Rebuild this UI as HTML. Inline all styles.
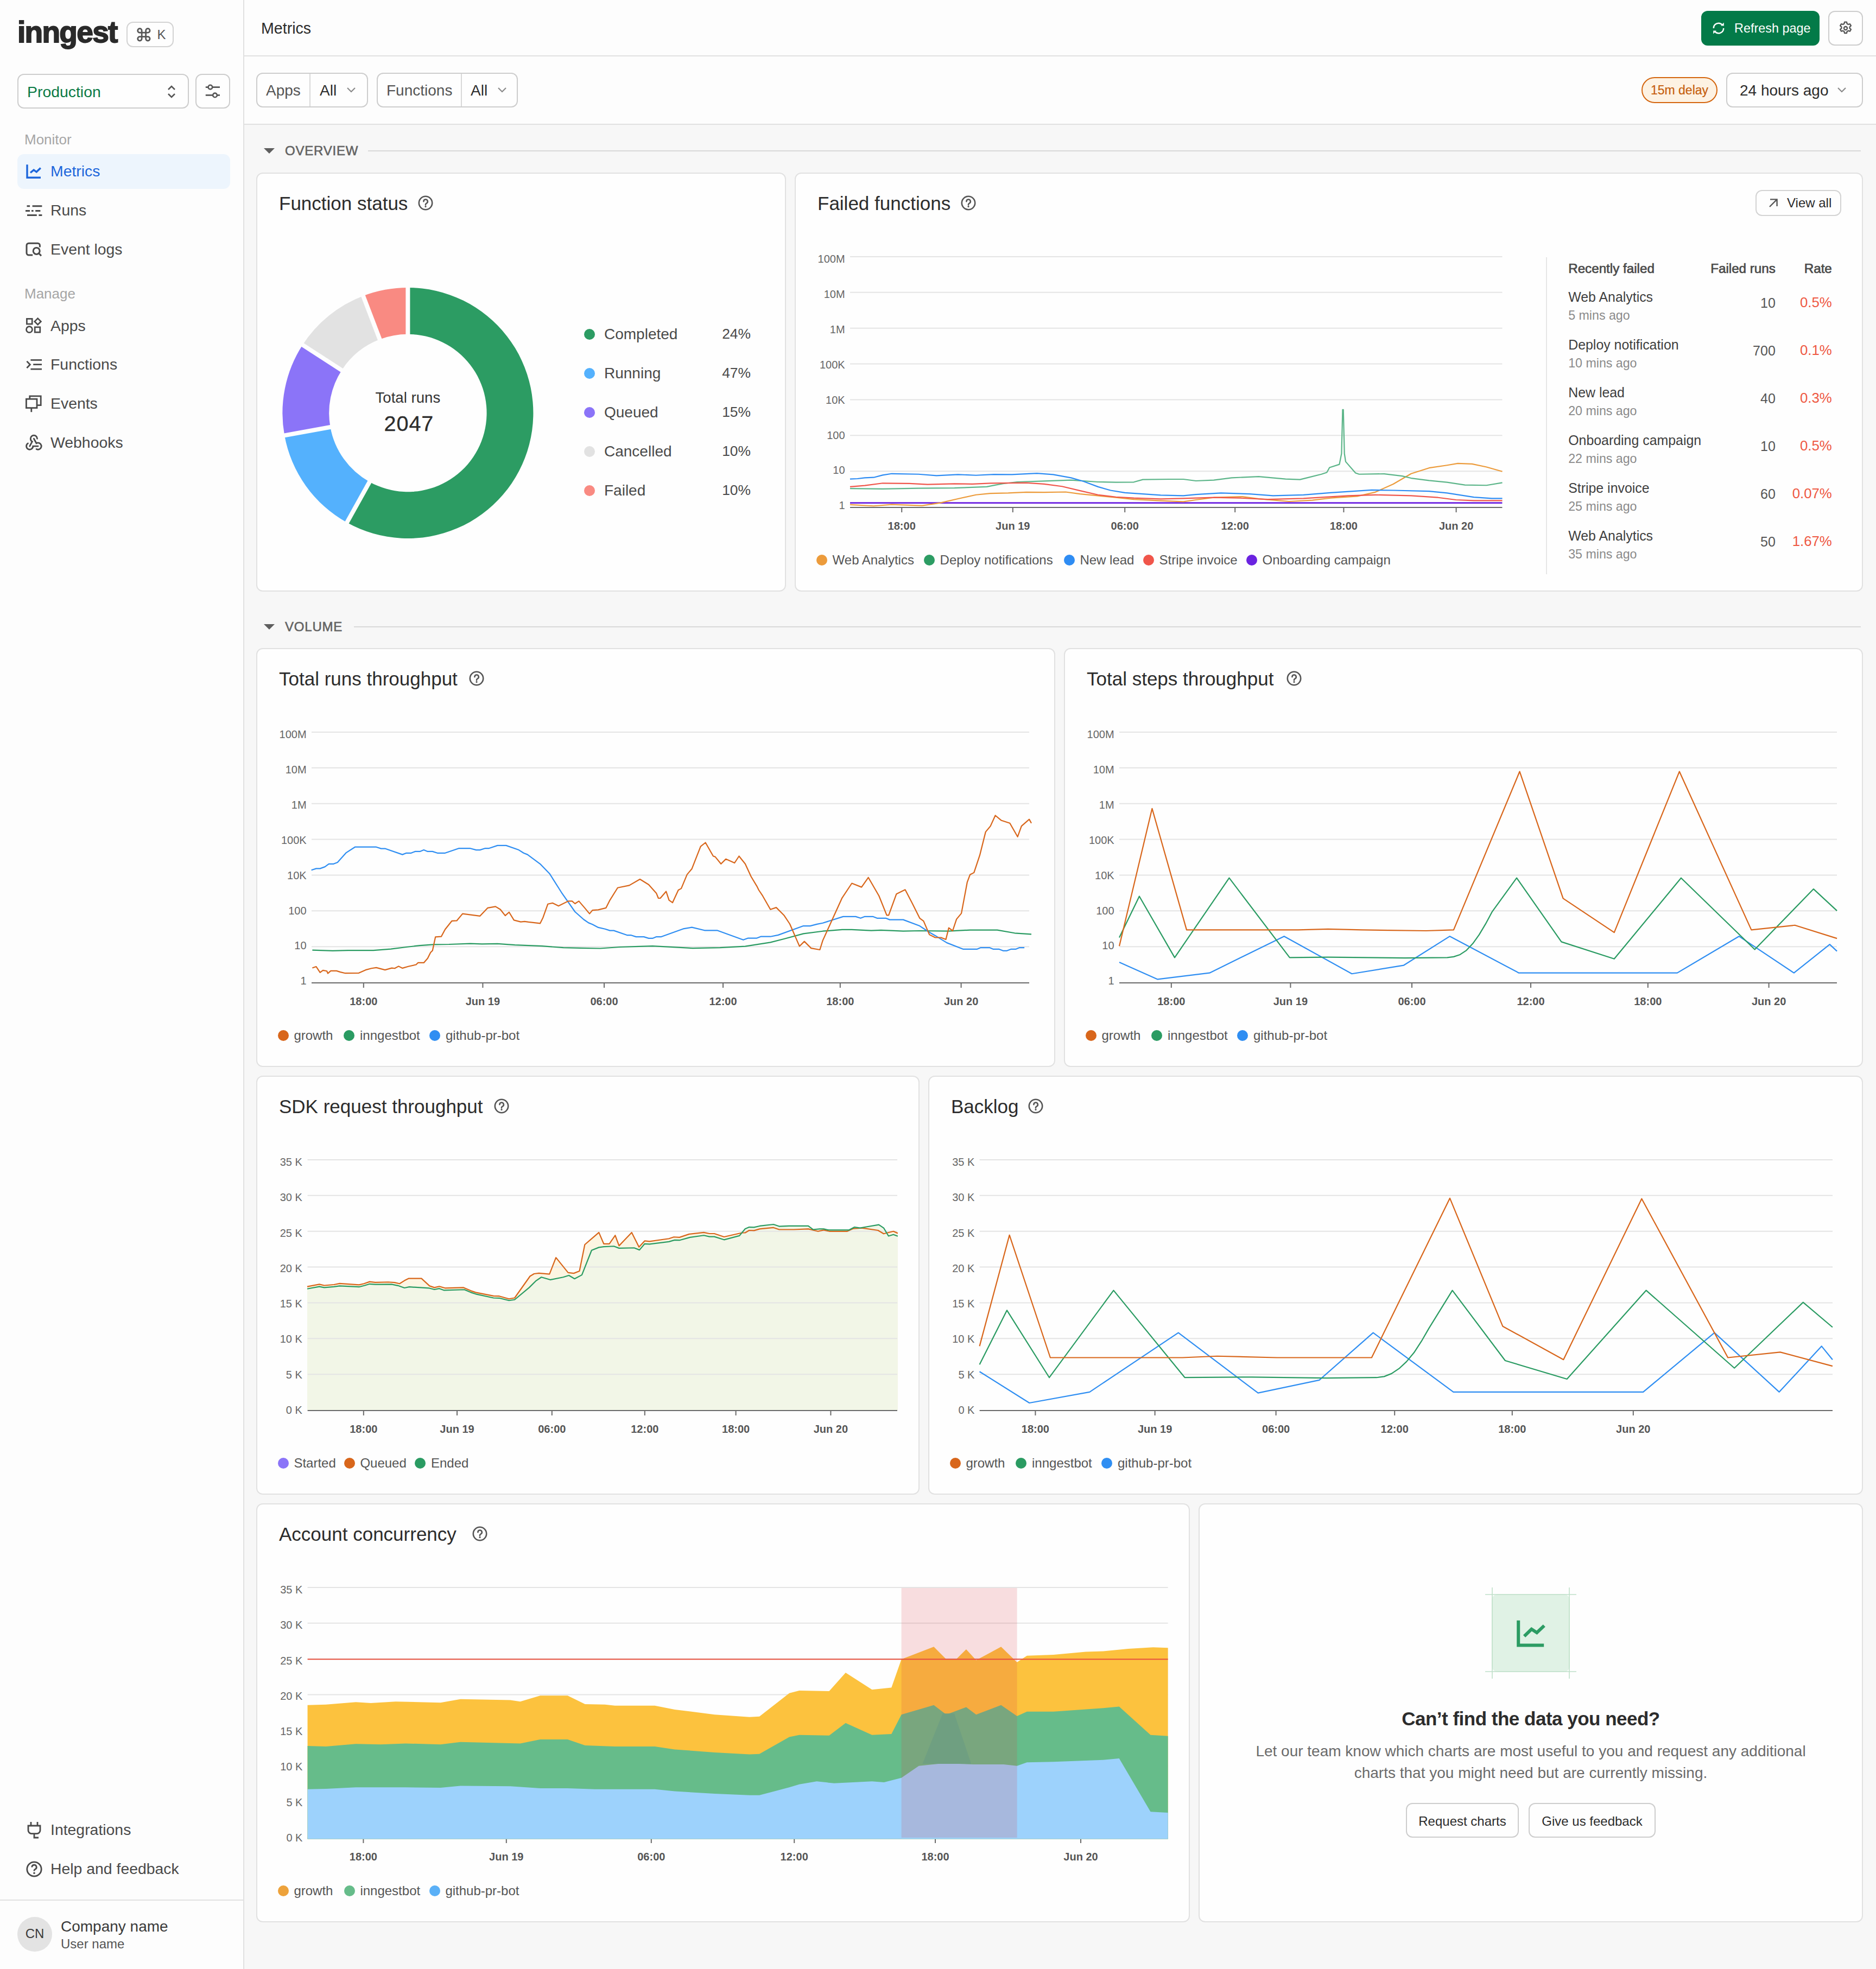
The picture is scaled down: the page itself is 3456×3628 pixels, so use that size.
<!DOCTYPE html>
<html><head><meta charset="utf-8"><title>Metrics</title><style>
html,body{margin:0;padding:0;}
body{width:3456px;height:3628px;overflow:hidden;background:#f7f7f7;}
#root{zoom:2;width:1728px;height:1814px;position:relative;overflow:hidden;font-family:"Liberation Sans",sans-serif;color:#2c2c2c;background:#f7f7f7;}
@media (max-width:2600px){body{width:1728px;height:1814px;}#root{zoom:1;}}
.abs{position:absolute;}
.t{position:absolute;white-space:nowrap;line-height:1;}
#side{position:absolute;left:0;top:0;width:224px;height:1814px;background:#fdfdfd;border-right:1px solid #e1e1e1;}
#hdr{position:absolute;left:225px;top:0;width:1503px;height:51px;background:#fdfdfd;border-bottom:1px solid #e1e1e1;}
#fbar{position:absolute;left:225px;top:52px;width:1503px;height:62px;background:#fdfdfd;border-bottom:1px solid #e1e1e1;}
.card{position:absolute;background:#fefefe;border:1px solid #e1e1e1;border-radius:6px;box-sizing:border-box;}
.nav{position:absolute;left:16px;width:196px;height:32px;border-radius:6px;}
.nav .lbl{position:absolute;left:30.5px;top:8.6px;font-size:14.2px;line-height:1;color:#4a4a4a;white-space:nowrap;}
.nav svg{position:absolute;left:7.4px;top:8px;overflow:visible;}
.btn{position:absolute;box-sizing:border-box;border:1px solid #cdcdcd;border-radius:6px;background:#fefefe;}
.ttl{position:absolute;left:21px;top:19.3px;font-size:17.5px;line-height:17.5px;color:#2c2c2c;white-space:nowrap;}
.q{position:absolute;}
.sech{position:absolute;left:243px;}
</style></head>
<body><div id="root">
<div id="side">
  <div class="t" style="left:16px;top:12.7px;font-size:27.5px;font-weight:bold;letter-spacing:-0.85px;color:#2a2a2a;line-height:34px;-webkit-text-stroke:0.9px #2a2a2a;">inngest</div>
  <div class="btn" style="left:116.6px;top:20.1px;width:43.6px;height:23.5px;border-color:#d3d3d3;">
    <svg class="abs" style="left:7.3px;top:3.5px" width="14.9" height="14.9" viewBox="0 0 24 24"><path d="M9 6v12M15 6v12M6 9h12M6 15h12M9 6a3 3 0 1 0-3 3M15 6a3 3 0 1 1 3 3M9 18a3 3 0 1 1-3-3M15 18a3 3 0 1 0 3-3" fill="none" stroke="#555" stroke-width="2.2"/></svg>
    <div class="t" style="left:27.1px;top:5.1px;font-size:12px;color:#555;">K</div>
  </div>
  <div class="btn" style="left:16px;top:68px;width:158px;height:32px;">
    <div class="t" style="left:8px;top:8.5px;font-size:14.2px;color:#0b7a45;">Production</div>
    <svg class="abs" style="left:136px;top:9px" width="10" height="13" viewBox="0 0 10 13"><path d="M2 4.5L5 1.5L8 4.5M2 8.5L5 11.5L8 8.5" fill="none" stroke="#555" stroke-width="1.3"/></svg>
  </div>
  <div class="btn" style="left:180px;top:68px;width:32px;height:32px;">
    <svg class="abs" style="left:7px;top:7px" width="16" height="16" viewBox="0 0 16 16"><path d="M1.4 4.3h2.3M7.7 4.3h6.8M1.4 11.7h6.6M12 11.7h2.5" fill="none" stroke="#555" stroke-width="1.4"/><circle cx="5.7" cy="4.3" r="1.9" fill="none" stroke="#555" stroke-width="1.3"/><circle cx="10" cy="11.7" r="1.9" fill="none" stroke="#555" stroke-width="1.3"/></svg>
  </div>
  <div class="t" style="left:22.5px;top:122.2px;font-size:13px;color:#a6a6a6;">Monitor</div>
  <div class="nav" style="top:142px;background:#edf5fd;">
    <svg width="16" height="16" viewBox="0 0 16 16"><path d="M1.5 1.6V13.6H14" fill="none" stroke="#1d66db" stroke-width="1.7"/><path d="M4.5 9.1L7.6 6.6L10.1 8.4L13.9 4.8" fill="none" stroke="#1d66db" stroke-width="1.7"/></svg>
    <div class="lbl" style="color:#1d66db;">Metrics</div>
  </div>
  <div class="nav" style="top:178px;">
    <svg width="16" height="16" viewBox="0 0 16 16"><path d="M1.25 3.85h2.8M6.3 3.85h8.9M0 8.2h4.05M5.5 8.2h1.8M9.1 8.2h4.6M1.5 12.2h8.9M12.2 12.2h3" fill="none" stroke="#4a4a4a" stroke-width="1.5"/></svg>
    <div class="lbl">Runs</div>
  </div>
  <div class="nav" style="top:214px;">
    <svg width="16" height="16" viewBox="0 0 16 16"><path d="M6.6 13H3a2 2 0 0 1-2-2V4.1a2 2 0 0 1 2-2h8.2a2 2 0 0 1 2 2V5.7" fill="none" stroke="#4a4a4a" stroke-width="1.5"/><circle cx="10.1" cy="9.2" r="3" fill="none" stroke="#4a4a4a" stroke-width="1.5"/><path d="M12.3 11.4l2.2 2.3" stroke="#4a4a4a" stroke-width="1.5"/></svg>
    <div class="lbl">Event logs</div>
  </div>
  <div class="t" style="left:22.5px;top:264.2px;font-size:13px;color:#a6a6a6;">Manage</div>
  <div class="nav" style="top:284.2px;">
    <svg width="16" height="16" viewBox="0 0 16 16"><rect x="1.2" y="1.7" width="4.9" height="4.8" fill="none" stroke="#4a4a4a" stroke-width="1.35"/><path d="M11.3 1.3L14.2 4.2L11.3 7.1L8.4 4.2Z" fill="none" stroke="#4a4a4a" stroke-width="1.35"/><circle cx="3.5" cy="11.6" r="2.75" fill="none" stroke="#4a4a4a" stroke-width="1.35"/><rect x="8.6" y="9.4" width="4.8" height="4.7" fill="none" stroke="#4a4a4a" stroke-width="1.35"/></svg>
    <div class="lbl">Apps</div>
  </div>
  <div class="nav" style="top:320px;">
    <svg width="16" height="16" viewBox="0 0 16 16"><path d="M1.2 4.8L4.2 7.9L1.2 11M4.7 3.7H15M7.1 7.8H15M4.7 12.1H15" fill="none" stroke="#4a4a4a" stroke-width="1.4"/></svg>
    <div class="lbl">Functions</div>
  </div>
  <div class="nav" style="top:356px;">
    <svg width="16" height="16" viewBox="0 0 16 16"><path d="M3.9 3.6V0.9H14.1V9.3H10.7" fill="none" stroke="#4a4a4a" stroke-width="1.4"/><rect x="0.7" y="3.6" width="9.8" height="8.2" fill="none" stroke="#4a4a4a" stroke-width="1.4"/><path d="M5.4 11.8V15.6" stroke="#4a4a4a" stroke-width="1.4"/></svg>
    <div class="lbl">Events</div>
  </div>
  <div class="nav" style="top:392px;">
    <svg width="18.4" height="18.4" viewBox="0 0 24 24" style="left:5.8px;top:6px;"><path d="M4.876 13.61a4 4 0 1 0 6.124 3.39h6" fill="none" stroke="#4a4a4a" stroke-width="1.85" stroke-linecap="round"/><path d="M15.066 20.502a4 4 0 1 0 1.934-7.502c-.706 0-1.424.179-2 .5l-3-5.5" fill="none" stroke="#4a4a4a" stroke-width="1.85" stroke-linecap="round"/><path d="M16 8a4 4 0 1 0-8 0c0 1.506.77 2.818 2 3.5l-3 5.5" fill="none" stroke="#4a4a4a" stroke-width="1.85" stroke-linecap="round"/></svg>
    <div class="lbl">Webhooks</div>
  </div>
  <div class="nav" style="top:1670px;">
    <svg width="16" height="16" viewBox="0 0 16 16"><path d="M5 .5v3.5M11 .5v3.5M2.5 4h11v4.3a3 3 0 0 1-3 3h-5a3 3 0 0 1-3-3z" fill="none" stroke="#4a4a4a" stroke-width="1.4"/><path d="M8 11.3v3.7h4" fill="none" stroke="#4a4a4a" stroke-width="1.4"/></svg>
    <div class="lbl">Integrations</div>
  </div>
  <div class="nav" style="top:1706px;">
    <svg width="16" height="16" viewBox="0 0 16 16"><circle cx="8" cy="8" r="6.6" fill="none" stroke="#4a4a4a" stroke-width="1.4"/><path d="M5.9 6.2a2.1 2.1 0 1 1 3 1.9c-.6.3-.9.6-.9 1.2v.4" fill="none" stroke="#4a4a4a" stroke-width="1.4"/><circle cx="8" cy="11.6" r=".9" fill="#4a4a4a"/></svg>
    <div class="lbl">Help and feedback</div>
  </div>
  <div class="abs" style="left:0;top:1750px;width:224px;height:1px;background:#e1e1e1;"></div>
  <div class="abs" style="left:16px;top:1766px;width:32px;height:32px;border-radius:16px;background:#e3e3e3;"></div>
  <div class="t" style="left:16px;top:1775.7px;width:32px;text-align:center;font-size:12px;color:#3a3a3a;">CN</div>
  <div class="t" style="left:56px;top:1768px;font-size:14px;color:#3a3a3a;">Company name</div>
  <div class="t" style="left:56px;top:1785px;font-size:12px;color:#555;">User name</div>
</div>

<div id="hdr">
  <div class="t" style="left:15.5px;top:19.1px;font-size:14.3px;color:#2c2c2c;">Metrics</div>
  <div class="abs" style="left:1342px;top:10px;width:109px;height:32px;border-radius:6px;background:#037a48;">
    <svg class="abs" style="left:9.9px;top:10.1px" width="12" height="12" viewBox="0 0 12 12"><path d="M1.4 6A4.6 4.6 0 0 1 9.4 2.9" fill="none" stroke="#fff" stroke-width="1.25"/><path d="M8 3.7H10.9V0.8Z" fill="#fff"/><path d="M10.6 6A4.6 4.6 0 0 1 2.6 9.1" fill="none" stroke="#fff" stroke-width="1.25"/><path d="M4 8.3H1.1V11.2Z" fill="#fff"/></svg>
    <div class="t" style="left:30.5px;top:10.5px;font-size:11.7px;color:#fff;">Refresh page</div>
  </div>
  <div class="btn" style="left:1459px;top:10px;width:32px;height:32px;">
    <svg class="abs" style="left:8px;top:8px" width="14" height="14" viewBox="0 0 24 24"><path d="M10.3 2.3h3.4l.6 2.6 1.9 1.1 2.6-.8 1.7 2.9-2 1.8v2.2l2 1.8-1.7 2.9-2.6-.8-1.9 1.1-.6 2.6h-3.4l-.6-2.6-1.9-1.1-2.6.8-1.7-2.9 2-1.8v-2.2l-2-1.8 1.7-2.9 2.6.8 1.9-1.1z" fill="none" stroke="#555" stroke-width="2" stroke-linejoin="round"/><circle cx="12" cy="12" r="2.6" fill="none" stroke="#555" stroke-width="2"/></svg>
  </div>
</div>

<div id="fbar">
  <div class="btn" style="left:11px;top:15px;width:103px;height:32px;">
    <div class="abs" style="left:47.8px;top:0;width:1px;height:30px;background:#d9d9d9;"></div>
    <div class="t" style="left:8px;top:8.5px;font-size:14px;color:#555;">Apps</div>
    <div class="t" style="left:57.5px;top:8.5px;font-size:14px;color:#2c2c2c;">All</div>
    <svg class="abs" style="left:82px;top:12px" width="9" height="6" viewBox="0 0 9 6"><path d="M1 1l3.5 3.5L8 1" fill="none" stroke="#8a8a8a" stroke-width="1.1"/></svg>
  </div>
  <div class="btn" style="left:122px;top:15px;width:130px;height:32px;">
    <div class="abs" style="left:76.5px;top:0;width:1px;height:30px;background:#d9d9d9;"></div>
    <div class="t" style="left:8px;top:8.5px;font-size:14px;color:#555;">Functions</div>
    <div class="t" style="left:85.5px;top:8.5px;font-size:14px;color:#2c2c2c;">All</div>
    <svg class="abs" style="left:110px;top:12px" width="9" height="6" viewBox="0 0 9 6"><path d="M1 1l3.5 3.5L8 1" fill="none" stroke="#8a8a8a" stroke-width="1.1"/></svg>
  </div>
  <div class="abs" style="left:1287px;top:19px;width:70px;height:24px;box-sizing:border-box;border:1px solid #d4660f;border-radius:12px;background:#fdf2e3;">
    <div class="t" style="left:0;width:68px;text-align:center;top:5.6px;font-size:11.5px;color:#c65f0e;-webkit-text-stroke:0.12px #c65f0e;">15m delay</div>
  </div>
  <div class="btn" style="left:1365px;top:15px;width:126px;height:32px;">
    <div class="t" style="left:11.5px;top:8.3px;font-size:14px;color:#2c2c2c;">24 hours ago</div>
    <svg class="abs" style="left:101px;top:12px" width="9" height="6" viewBox="0 0 9 6"><path d="M1 1l3.5 3.5L8 1" fill="none" stroke="#8a8a8a" stroke-width="1.1"/></svg>
  </div>
</div>
<svg class="abs" style="left:243px;top:136.3px" width="10" height="5" viewBox="0 0 10 5"><path d="M0 0h10L5 5z" fill="#5e5e5e"/></svg>
<div class="t" style="left:262.5px;top:133.0px;font-size:12px;font-weight:normal;-webkit-text-stroke:0.3px #636363;letter-spacing:0.4px;color:#636363;">OVERVIEW</div>
<div class="abs" style="left:339px;top:138.5px;width:1375px;height:1px;background:#d9d9d9;"></div><svg class="abs" style="left:243px;top:574.8px" width="10" height="5" viewBox="0 0 10 5"><path d="M0 0h10L5 5z" fill="#5e5e5e"/></svg>
<div class="t" style="left:262.5px;top:571.5px;font-size:12px;font-weight:normal;-webkit-text-stroke:0.3px #636363;letter-spacing:0.4px;color:#636363;">VOLUME</div>
<div class="abs" style="left:326px;top:577px;width:1388px;height:1px;background:#d9d9d9;"></div><div class="card" style="left:236px;top:159px;width:488px;height:386px;"><div class="abs" style="left:-1px;top:-1px;width:488px;height:386px;"><div class="ttl">Function status</div><svg class="abs" style="left:149.0px;top:21.0px" width="14" height="14" viewBox="0 0 14 14"><circle cx="7" cy="7" r="6.1" fill="none" stroke="#555" stroke-width="1.3"/><path d="M5.2 5.6a1.85 1.85 0 1 1 2.6 1.7c-.5.25-.8.55-.8 1.05v.35" fill="none" stroke="#555" stroke-width="1.3" stroke-linecap="round"/><circle cx="7" cy="10.3" r=".8" fill="#555"/></svg><svg class="abs" style="left:0;top:0" width="488" height="386"><path d="M139.70 106.00A115.5 115.5 0 1 1 83.53 322.42L104.39 284.94A72.6 72.6 0 1 0 139.70 148.90Z" fill="#2c9c63"/><path d="M83.53 322.42A115.5 115.5 0 0 1 26.06 242.15L68.27 234.48A72.6 72.6 0 0 0 104.39 284.94Z" fill="#54b1fd"/><path d="M26.06 242.15A115.5 115.5 0 0 1 42.72 158.76L78.74 182.07A72.6 72.6 0 0 0 68.27 234.48Z" fill="#8b74f8"/><path d="M42.72 158.76A115.5 115.5 0 0 1 98.50 113.60L113.80 153.68A72.6 72.6 0 0 0 78.74 182.07Z" fill="#e2e2e2"/><path d="M98.50 113.60A115.5 115.5 0 0 1 139.70 106.00L139.70 148.90A72.6 72.6 0 0 0 113.80 153.68Z" fill="#f98a82"/><line x1="139.7" y1="221.5" x2="139.70" y2="103.00" stroke="#fefefe" stroke-width="4"/><line x1="139.7" y1="221.5" x2="82.07" y2="325.04" stroke="#fefefe" stroke-width="4"/><line x1="139.7" y1="221.5" x2="23.11" y2="242.69" stroke="#fefefe" stroke-width="4"/><line x1="139.7" y1="221.5" x2="40.21" y2="157.13" stroke="#fefefe" stroke-width="4"/><line x1="139.7" y1="221.5" x2="97.43" y2="110.80" stroke="#fefefe" stroke-width="4"/></svg><div class="t" style="left:89.7px;width:100px;text-align:center;top:200.7px;font-size:13.8px;color:#333;">Total runs</div><div class="t" style="left:90.5px;width:100px;text-align:center;top:221.5px;font-size:19.8px;letter-spacing:0.45px;text-indent:0.45px;color:#2c2c2c;-webkit-text-stroke:0.15px #2c2c2c;">2047</div><div class="abs" style="left:302px;top:144.0px;width:10px;height:10px;border-radius:5px;background:#2c9c63;"></div><div class="t" style="left:320.5px;top:142.1px;font-size:14px;color:#4a4a4a;">Completed</div><div class="t" style="right:32.5px;top:142.1px;font-size:13.2px;color:#4a4a4a;text-align:right;">24%</div><div class="abs" style="left:302px;top:180.0px;width:10px;height:10px;border-radius:5px;background:#54b1fd;"></div><div class="t" style="left:320.5px;top:178.0px;font-size:14px;color:#4a4a4a;">Running</div><div class="t" style="right:32.5px;top:178.0px;font-size:13.2px;color:#4a4a4a;text-align:right;">47%</div><div class="abs" style="left:302px;top:215.9px;width:10px;height:10px;border-radius:5px;background:#8b74f8;"></div><div class="t" style="left:320.5px;top:214.0px;font-size:14px;color:#4a4a4a;">Queued</div><div class="t" style="right:32.5px;top:214.0px;font-size:13.2px;color:#4a4a4a;text-align:right;">15%</div><div class="abs" style="left:302px;top:251.8px;width:10px;height:10px;border-radius:5px;background:#e2e2e2;"></div><div class="t" style="left:320.5px;top:249.9px;font-size:14px;color:#4a4a4a;">Cancelled</div><div class="t" style="right:32.5px;top:249.9px;font-size:13.2px;color:#4a4a4a;text-align:right;">10%</div><div class="abs" style="left:302px;top:287.8px;width:10px;height:10px;border-radius:5px;background:#f98a82;"></div><div class="t" style="left:320.5px;top:285.9px;font-size:14px;color:#4a4a4a;">Failed</div><div class="t" style="right:32.5px;top:285.9px;font-size:13.2px;color:#4a4a4a;text-align:right;">10%</div></div></div><div class="card" style="left:732px;top:159px;width:984px;height:386px;"><div class="abs" style="left:-1px;top:-1px;width:984px;height:386px;"><div class="ttl">Failed functions</div><svg class="abs" style="left:153.0px;top:21.0px" width="14" height="14" viewBox="0 0 14 14"><circle cx="7" cy="7" r="6.1" fill="none" stroke="#555" stroke-width="1.3"/><path d="M5.2 5.6a1.85 1.85 0 1 1 2.6 1.7c-.5.25-.8.55-.8 1.05v.35" fill="none" stroke="#555" stroke-width="1.3" stroke-linecap="round"/><circle cx="7" cy="10.3" r=".8" fill="#555"/></svg><svg class="abs" style="left:0;top:0" width="984" height="386"><line x1="51" y1="77.49" x2="651.7" y2="77.49" stroke="#e4e4e4" stroke-width="1"/><line x1="51" y1="110.42" x2="651.7" y2="110.42" stroke="#e4e4e4" stroke-width="1"/><line x1="51" y1="143.35" x2="651.7" y2="143.35" stroke="#e4e4e4" stroke-width="1"/><line x1="51" y1="176.28" x2="651.7" y2="176.28" stroke="#e4e4e4" stroke-width="1"/><line x1="51" y1="209.21" x2="651.7" y2="209.21" stroke="#e4e4e4" stroke-width="1"/><line x1="51" y1="242.14" x2="651.7" y2="242.14" stroke="#e4e4e4" stroke-width="1"/><line x1="51" y1="275.07" x2="651.7" y2="275.07" stroke="#e4e4e4" stroke-width="1"/><line x1="51" y1="308.5" x2="651.7" y2="308.5" stroke="#6a6a6a" stroke-width="1"/><line x1="98.6" y1="308.5" x2="98.6" y2="313" stroke="#6a6a6a" stroke-width="1"/><line x1="200.9" y1="308.5" x2="200.9" y2="313" stroke="#6a6a6a" stroke-width="1"/><line x1="304.1" y1="308.5" x2="304.1" y2="313" stroke="#6a6a6a" stroke-width="1"/><line x1="405.6" y1="308.5" x2="405.6" y2="313" stroke="#6a6a6a" stroke-width="1"/><line x1="505.7" y1="308.5" x2="505.7" y2="313" stroke="#6a6a6a" stroke-width="1"/><line x1="609.3" y1="308.5" x2="609.3" y2="313" stroke="#6a6a6a" stroke-width="1"/></svg><div class="t" style="right:937.7px;top:74.53px;font-size:10px;color:#666666;text-align:right;">100M</div><div class="t" style="right:937.7px;top:106.98px;font-size:10px;color:#666666;text-align:right;">10M</div><div class="t" style="right:937.7px;top:139.44px;font-size:10px;color:#666666;text-align:right;">1M</div><div class="t" style="right:937.7px;top:171.89px;font-size:10px;color:#666666;text-align:right;">100K</div><div class="t" style="right:937.7px;top:204.34px;font-size:10px;color:#666666;text-align:right;">10K</div><div class="t" style="right:937.7px;top:236.78px;font-size:10px;color:#666666;text-align:right;">100</div><div class="t" style="right:937.7px;top:269.24px;font-size:10px;color:#666666;text-align:right;">10</div><div class="t" style="right:937.7px;top:301.69px;font-size:10px;color:#666666;text-align:right;">1</div><div class="t" style="left:68.6px;width:60px;text-align:center;top:320.34px;font-size:10px;font-weight:bold;color:#555;">18:00</div><div class="t" style="left:170.9px;width:60px;text-align:center;top:320.34px;font-size:10px;font-weight:bold;color:#555;">Jun 19</div><div class="t" style="left:274.1px;width:60px;text-align:center;top:320.34px;font-size:10px;font-weight:bold;color:#555;">06:00</div><div class="t" style="left:375.6px;width:60px;text-align:center;top:320.34px;font-size:10px;font-weight:bold;color:#555;">12:00</div><div class="t" style="left:475.7px;width:60px;text-align:center;top:320.34px;font-size:10px;font-weight:bold;color:#555;">18:00</div><div class="t" style="left:579.3px;width:60px;text-align:center;top:320.34px;font-size:10px;font-weight:bold;color:#555;">Jun 20</div><svg class="abs" style="left:0;top:0" width="984" height="386"><polyline points="51,304.3 651.7,304.3" fill="none" stroke="#6a1fe0" stroke-width="1.3" stroke-linejoin="round" /><polyline points="50.97,305.97 72.79,307.13 89.31,305.81 117.4,306.8 133.93,304.32 150.45,300.52 166.98,296.89 180.2,295.56 196.72,295.23 213.25,294.41 229.77,294.57 249.6,294.24 262.82,296.06 279.34,297.71 295.87,299.36 312.39,301.02 337.18,302.34 358,303.16 369.52,301.51 386.05,299.36 412.49,298.54 427.36,300.52 455.45,303 476.93,301.84 493.46,299.86 518.25,298.21 534.77,294.41 551.29,286.97 567.82,277.39 584.34,272.1 600.87,269.62 610.78,267.97 624,268.46 637.22,271.27 651.76,275.4" fill="none" stroke="#ec9b3b" stroke-width="1.1" stroke-linejoin="round" /><polyline points="50.97,291.1 81.05,291.43 114.1,290.77 147.15,290.61 176.89,289.45 185.15,287.8 191.76,286.64 204.98,284.99 229.77,284.16 254.56,283.33 279.34,284.99 295.87,285.32 312.39,285.15 320.66,282.84 345.44,282.51 358,282.51 369.52,284 386.05,283.33 402.57,281.19 427.36,280.03 452.15,282.34 465.37,282.84 471.98,281.19 485.2,277.88 490.15,276.23 492.63,271.77 501.72,268.79 503.7,258.88 504.7,218.39 505.36,218.39 506.35,258.88 507.5,266.31 516.59,276.73 519.9,277.88 543.03,277.55 559.56,279.53 567.82,281.52 584.34,283.67 600.87,285.32 617.39,287.8 637.22,288.13 651.76,285.65" fill="none" stroke="#5cb589" stroke-width="1.1" stroke-linejoin="round" /><polyline points="50.97,289.45 64.52,288.29 81.05,286.14 105.84,286.47 122.36,287.3 147.15,286.64 163.67,286.97 180.2,286.14 213.25,285.81 229.77,286.97 246.29,289.12 262.82,293.08 279.34,296.89 295.87,298.87 312.39,299.86 337.18,300.69 358,300.19 386.05,299.36 410.84,299.86 435.62,301.02 468.67,300.19 509.98,297.71 534.77,296.89 567.82,297.71 592.61,299.36 609.13,301.51 625.66,302.17 651.76,302.17" fill="none" stroke="#f0554a" stroke-width="1.1" stroke-linejoin="round" /><polyline points="50.97,282.34 57.91,282.01 64.52,281.19 72.79,280.86 81.05,278.71 89.31,277.39 114.1,277.88 130.62,279.2 150.45,278.21 166.98,278.87 183.5,278.05 200.03,278.21 223.16,277.06 238.03,278.21 254.56,281.19 266.12,284.49 279.34,289.45 290.91,292.75 304.13,294.9 320.66,296.06 337.18,297.22 358,297.71 369.52,296.55 392.66,295.23 419.1,296.06 440.58,297.71 468.67,296.89 493.46,294.9 531.47,292.42 551.29,292.75 584.34,293.58 600.87,295.23 625.66,299.03 642.18,300.19 651.76,300.19" fill="none" stroke="#2e8cf3" stroke-width="1.1" stroke-linejoin="round" /></svg><div class="abs" style="left:19.9px;top:352px;width:10px;height:10px;border-radius:5px;background:#ec9b3b;"></div><div class="t" style="left:34.8px;top:351.04px;font-size:12px;color:#555;">Web Analytics</div><div class="abs" style="left:118.9px;top:352px;width:10px;height:10px;border-radius:5px;background:#2c9c63;"></div><div class="t" style="left:133.8px;top:351.04px;font-size:12px;color:#555;">Deploy notifications</div><div class="abs" style="left:247.8px;top:352px;width:10px;height:10px;border-radius:5px;background:#2e8cf3;"></div><div class="t" style="left:262.7px;top:351.04px;font-size:12px;color:#555;">New lead</div><div class="abs" style="left:320.9px;top:352px;width:10px;height:10px;border-radius:5px;background:#f0554a;"></div><div class="t" style="left:335.8px;top:351.04px;font-size:12px;color:#555;">Stripe invoice</div><div class="abs" style="left:415.9px;top:352px;width:10px;height:10px;border-radius:5px;background:#6a22e0;"></div><div class="t" style="left:430.8px;top:351.04px;font-size:12px;color:#555;">Onboarding campaign</div><div class="btn" style="left:885px;top:16px;width:79px;height:24px;border-color:#d3d3d3;">
<svg class="abs" style="left:11px;top:6.5px" width="9" height="9" viewBox="0 0 9 9"><path d="M1 8L7.8 1.2M1.5 1.2H7.8V7.5" fill="none" stroke="#555" stroke-width="1.2"/></svg>
<div class="t" style="left:28px;top:5.1px;font-size:12px;color:#2c2c2c;">View all</div></div><div class="abs" style="left:692px;top:78px;width:1px;height:292px;background:#e6e6e6;"></div><div class="t" style="left:712.5999999999999px;top:82.5px;font-size:12.1px;font-weight:normal;-webkit-text-stroke:0.35px #4a4a4a;color:#4a4a4a;">Recently failed</div><div class="t" style="right:80.6px;top:82.5px;font-size:12.1px;font-weight:normal;-webkit-text-stroke:0.35px #4a4a4a;color:#4a4a4a;">Failed runs</div><div class="t" style="right:28.6px;top:82.5px;font-size:12.1px;font-weight:normal;-webkit-text-stroke:0.35px #4a4a4a;color:#4a4a4a;">Rate</div><div class="t" style="left:712.5999999999999px;top:108.5px;font-size:12.45px;color:#3f3f3f;">Web Analytics</div><div class="t" style="left:712.5999999999999px;top:125.8px;font-size:11.6px;color:#8a8a8a;">5 mins ago</div><div class="t" style="right:80.6px;top:113.9px;font-size:12.5px;color:#555;">10</div><div class="t" style="right:28.6px;top:113.6px;font-size:12.9px;color:#ee5842;">0.5%</div><div class="t" style="left:712.5999999999999px;top:152.5px;font-size:12.45px;color:#3f3f3f;">Deploy notification</div><div class="t" style="left:712.5999999999999px;top:169.8px;font-size:11.6px;color:#8a8a8a;">10 mins ago</div><div class="t" style="right:80.6px;top:157.9px;font-size:12.5px;color:#555;">700</div><div class="t" style="right:28.6px;top:157.6px;font-size:12.9px;color:#ee5842;">0.1%</div><div class="t" style="left:712.5999999999999px;top:196.5px;font-size:12.45px;color:#3f3f3f;">New lead</div><div class="t" style="left:712.5999999999999px;top:213.8px;font-size:11.6px;color:#8a8a8a;">20 mins ago</div><div class="t" style="right:80.6px;top:201.9px;font-size:12.5px;color:#555;">40</div><div class="t" style="right:28.6px;top:201.6px;font-size:12.9px;color:#ee5842;">0.3%</div><div class="t" style="left:712.5999999999999px;top:240.5px;font-size:12.45px;color:#3f3f3f;">Onboarding campaign</div><div class="t" style="left:712.5999999999999px;top:257.8px;font-size:11.6px;color:#8a8a8a;">22 mins ago</div><div class="t" style="right:80.6px;top:245.9px;font-size:12.5px;color:#555;">10</div><div class="t" style="right:28.6px;top:245.6px;font-size:12.9px;color:#ee5842;">0.5%</div><div class="t" style="left:712.5999999999999px;top:284.5px;font-size:12.45px;color:#3f3f3f;">Stripe invoice</div><div class="t" style="left:712.5999999999999px;top:301.8px;font-size:11.6px;color:#8a8a8a;">25 mins ago</div><div class="t" style="right:80.6px;top:289.9px;font-size:12.5px;color:#555;">60</div><div class="t" style="right:28.6px;top:289.6px;font-size:12.9px;color:#ee5842;">0.07%</div><div class="t" style="left:712.5999999999999px;top:328.5px;font-size:12.45px;color:#3f3f3f;">Web Analytics</div><div class="t" style="left:712.5999999999999px;top:345.8px;font-size:11.6px;color:#8a8a8a;">35 mins ago</div><div class="t" style="right:80.6px;top:333.9px;font-size:12.5px;color:#555;">50</div><div class="t" style="right:28.6px;top:333.6px;font-size:12.9px;color:#ee5842;">1.67%</div></div></div><div class="card" style="left:236px;top:597px;width:736px;height:386px;"><div class="abs" style="left:-1px;top:-1px;width:736px;height:386px;"><div class="ttl">Total runs throughput</div><svg class="abs" style="left:196.0px;top:21.0px" width="14" height="14" viewBox="0 0 14 14"><circle cx="7" cy="7" r="6.1" fill="none" stroke="#555" stroke-width="1.3"/><path d="M5.2 5.6a1.85 1.85 0 1 1 2.6 1.7c-.5.25-.8.55-.8 1.05v.35" fill="none" stroke="#555" stroke-width="1.3" stroke-linecap="round"/><circle cx="7" cy="10.3" r=".8" fill="#555"/></svg><svg class="abs" style="left:0;top:0" width="736" height="386"><line x1="51" y1="77.49" x2="712" y2="77.49" stroke="#e4e4e4" stroke-width="1"/><line x1="51" y1="110.42" x2="712" y2="110.42" stroke="#e4e4e4" stroke-width="1"/><line x1="51" y1="143.35" x2="712" y2="143.35" stroke="#e4e4e4" stroke-width="1"/><line x1="51" y1="176.28" x2="712" y2="176.28" stroke="#e4e4e4" stroke-width="1"/><line x1="51" y1="209.21" x2="712" y2="209.21" stroke="#e4e4e4" stroke-width="1"/><line x1="51" y1="242.14" x2="712" y2="242.14" stroke="#e4e4e4" stroke-width="1"/><line x1="51" y1="275.07" x2="712" y2="275.07" stroke="#e4e4e4" stroke-width="1"/><line x1="51" y1="308.5" x2="712" y2="308.5" stroke="#6a6a6a" stroke-width="1"/><line x1="98.9" y1="308.5" x2="98.9" y2="313" stroke="#6a6a6a" stroke-width="1"/><line x1="208.7" y1="308.5" x2="208.7" y2="313" stroke="#6a6a6a" stroke-width="1"/><line x1="320.5" y1="308.5" x2="320.5" y2="313" stroke="#6a6a6a" stroke-width="1"/><line x1="430" y1="308.5" x2="430" y2="313" stroke="#6a6a6a" stroke-width="1"/><line x1="537.9" y1="308.5" x2="537.9" y2="313" stroke="#6a6a6a" stroke-width="1"/><line x1="649.3" y1="308.5" x2="649.3" y2="313" stroke="#6a6a6a" stroke-width="1"/></svg><div class="t" style="right:689.7px;top:74.53px;font-size:10px;color:#666666;text-align:right;">100M</div><div class="t" style="right:689.7px;top:106.98px;font-size:10px;color:#666666;text-align:right;">10M</div><div class="t" style="right:689.7px;top:139.44px;font-size:10px;color:#666666;text-align:right;">1M</div><div class="t" style="right:689.7px;top:171.89px;font-size:10px;color:#666666;text-align:right;">100K</div><div class="t" style="right:689.7px;top:204.34px;font-size:10px;color:#666666;text-align:right;">10K</div><div class="t" style="right:689.7px;top:236.78px;font-size:10px;color:#666666;text-align:right;">100</div><div class="t" style="right:689.7px;top:269.24px;font-size:10px;color:#666666;text-align:right;">10</div><div class="t" style="right:689.7px;top:301.69px;font-size:10px;color:#666666;text-align:right;">1</div><div class="t" style="left:68.9px;width:60px;text-align:center;top:320.34px;font-size:10px;font-weight:bold;color:#555;">18:00</div><div class="t" style="left:178.7px;width:60px;text-align:center;top:320.34px;font-size:10px;font-weight:bold;color:#555;">Jun 19</div><div class="t" style="left:290.5px;width:60px;text-align:center;top:320.34px;font-size:10px;font-weight:bold;color:#555;">06:00</div><div class="t" style="left:400px;width:60px;text-align:center;top:320.34px;font-size:10px;font-weight:bold;color:#555;">12:00</div><div class="t" style="left:507.9px;width:60px;text-align:center;top:320.34px;font-size:10px;font-weight:bold;color:#555;">18:00</div><div class="t" style="left:619.3px;width:60px;text-align:center;top:320.34px;font-size:10px;font-weight:bold;color:#555;">Jun 20</div><svg class="abs" style="left:0;top:0" width="736" height="386"><polyline points="51.68,278.36 70.43,278.89 84.71,278.54 107.93,278.54 124,277.29 138.29,275.5 150.79,274.07 163.29,273.18 177.57,273 197.21,272.29 207.93,272.64 222.21,272.46 238.29,273.54 263.29,274.61 282.93,276.04 299,276.39 316.86,276.75 334.71,275.5 352.57,274.96 365.07,274.61 379.36,275.32 402.21,276.57 427.21,276.04 450.43,274.79 473.64,271.21 486.14,268 504,263.18 521.86,260.86 539.71,259.43 548.64,259.43 566.5,260.32 575.43,259.96 595.96,260.86 611.14,260.5 637.93,260.86 657.57,259.79 682.57,259.79 698.64,262.64 714,263.71" fill="none" stroke="#2a9b62" stroke-width="1.1" stroke-linejoin="round" /><polyline points="50.79,204.61 55.25,203.18 58.82,203.18 63.29,201.57 66.86,198.89 71.32,198.89 74.89,197.46 82.93,188.54 90.96,183.36 110.61,183.36 115.07,184.79 118.64,184.79 134.71,190.32 138.29,188.89 142.75,188.89 146.32,187.46 150.79,187.46 154.36,186.04 157.93,187.46 162.39,187.46 166.86,188.89 174,188.89 186.5,184.61 197.21,184.61 202.57,186.04 206.14,186.04 210.61,184.61 214.18,184.61 222.21,181.93 230.25,181.93 241.86,186.04 246.32,188.89 249.89,190.32 261.5,198.89 270.43,208.18 281.14,225.14 293.64,243 301.68,250.14 306.14,253.18 309.71,254.61 315.07,257.46 321.32,258.89 325.79,260.32 329.36,260.32 341.86,264.61 345.43,264.61 349.89,266.04 357.04,266.04 361.5,267.46 365.07,267.46 368.64,266.04 373.11,266.04 379.36,263.71 393.29,258.71 401.32,257.29 412.93,260.14 424.54,260.14 448.64,268.89 453.11,267.29 461.14,267.29 464.71,265.86 473.64,265.86 480.79,264.43 504,256.04 510.25,256.04 516.5,254.43 521.86,253.36 540.61,247.46 552.21,247.46 556.68,248.89 560.25,247.46 568.29,247.46 571.86,248.89 579.89,248.89 583.46,250.32 595.96,250.32 611.14,256.04 619.18,261.39 625.43,264.96 636.14,271.57 651.32,277.46 663.82,277.46 667.39,276.04 675.43,276.04 679,277.46 684.36,277.46 687.93,278.89 691.5,278.89 695.07,277.46 699.54,277.46 703.11,276.04 707.57,276.04" fill="none" stroke="#2f8ef2" stroke-width="1.1" stroke-linejoin="round" /><polyline points="51.68,294.79 55.25,293.54 58.82,298.89 61.5,296.93 65.07,297.64 65.96,299.79 68.64,297.46 74,297.46 77.57,298.54 82.04,299.61 94.54,299.43 100.79,296.57 106.14,295.14 110.61,294.43 118.64,296.57 124.89,294.79 127.57,295.14 131.14,293.18 134.71,294.96 140.07,293.36 147.21,291.75 149,289.96 154.36,289.96 157.93,285.86 160.61,280.5 162.39,278.71 165.07,266.21 170.43,265.86 174,259.25 180.25,251.39 184.71,251.21 190.07,244.79 206.14,246.93 213.29,239.43 220.43,238.18 224.89,240.86 229.36,246.57 232.93,243.36 237.39,250.68 243.64,252.29 247.21,251.93 250.79,252.46 261.5,253.71 264.18,248.36 268.64,235.86 273.11,234.96 278.46,237.64 287.39,233.18 290.96,233.18 293.64,235.5 297.21,233.18 302.57,239.43 307.04,244.79 309.71,241.57 315.07,241.21 322.21,239.43 325.79,232.29 332.93,220.86 343.64,218.71 353.46,213 361.5,218 368.64,226.04 370.43,230.5 372.21,230.5 377.57,224.25 380.25,232.29 383.46,234.61 388.82,223 391.5,221.57 396.86,208.71 401.32,203.36 409.36,182.82 413.82,179.25 420.96,191.75 422.75,192.29 428.11,198.89 432.57,194.43 440.61,198 444.71,191.75 450.43,198.89 455.79,210.5 461.14,219.43 462.93,223 466.5,228.36 473.64,240.86 479,239.07 486.14,246.21 491.5,254.25 500.43,274.79 504.89,270.32 511.14,276.57 519.18,278 521.86,269.43 530.79,249.79 539.71,230.14 548.64,216.75 557.57,220.32 563.82,211.39 573.64,228.36 580.79,246.21 582.57,246.21 589.71,226.57 597.75,222.64 604,234.61 611.14,248.89 614.71,251.57 620.07,264.07 625.43,266.75 630.79,266.75 635.25,268.54 637.93,257.82 641.5,260.5 645.07,249.79 649.54,244.43 654.89,215.86 657.57,208.71 661.14,206.93 666.5,190.86 671.86,169.43 676.32,164.07 680.79,154.25 686.14,158.71 694.18,161.39 697.75,167.64 701.32,173.89 704.89,164.07 712.04,157.82 714,161.39" fill="none" stroke="#d8661b" stroke-width="1.1" stroke-linejoin="round" /></svg><div class="abs" style="left:19.8px;top:352px;width:10px;height:10px;border-radius:5px;background:#d8661b;"></div><div class="t" style="left:34.7px;top:351.04px;font-size:12px;color:#555;">growth</div><div class="abs" style="left:80.6px;top:352px;width:10px;height:10px;border-radius:5px;background:#2a9b62;"></div><div class="t" style="left:95.5px;top:351.04px;font-size:12px;color:#555;">inngestbot</div><div class="abs" style="left:159.6px;top:352px;width:10px;height:10px;border-radius:5px;background:#2f8ef2;"></div><div class="t" style="left:174.5px;top:351.04px;font-size:12px;color:#555;">github-pr-bot</div></div></div><div class="card" style="left:980px;top:597px;width:736px;height:386px;"><div class="abs" style="left:-1px;top:-1px;width:736px;height:386px;"><div class="ttl">Total steps throughput</div><svg class="abs" style="left:205.0px;top:21.0px" width="14" height="14" viewBox="0 0 14 14"><circle cx="7" cy="7" r="6.1" fill="none" stroke="#555" stroke-width="1.3"/><path d="M5.2 5.6a1.85 1.85 0 1 1 2.6 1.7c-.5.25-.8.55-.8 1.05v.35" fill="none" stroke="#555" stroke-width="1.3" stroke-linecap="round"/><circle cx="7" cy="10.3" r=".8" fill="#555"/></svg><svg class="abs" style="left:0;top:0" width="736" height="386"><line x1="51" y1="77.49" x2="712" y2="77.49" stroke="#e4e4e4" stroke-width="1"/><line x1="51" y1="110.42" x2="712" y2="110.42" stroke="#e4e4e4" stroke-width="1"/><line x1="51" y1="143.35" x2="712" y2="143.35" stroke="#e4e4e4" stroke-width="1"/><line x1="51" y1="176.28" x2="712" y2="176.28" stroke="#e4e4e4" stroke-width="1"/><line x1="51" y1="209.21" x2="712" y2="209.21" stroke="#e4e4e4" stroke-width="1"/><line x1="51" y1="242.14" x2="712" y2="242.14" stroke="#e4e4e4" stroke-width="1"/><line x1="51" y1="275.07" x2="712" y2="275.07" stroke="#e4e4e4" stroke-width="1"/><line x1="51" y1="308.5" x2="712" y2="308.5" stroke="#6a6a6a" stroke-width="1"/><line x1="98.9" y1="308.5" x2="98.9" y2="313" stroke="#6a6a6a" stroke-width="1"/><line x1="208.7" y1="308.5" x2="208.7" y2="313" stroke="#6a6a6a" stroke-width="1"/><line x1="320.5" y1="308.5" x2="320.5" y2="313" stroke="#6a6a6a" stroke-width="1"/><line x1="430" y1="308.5" x2="430" y2="313" stroke="#6a6a6a" stroke-width="1"/><line x1="537.9" y1="308.5" x2="537.9" y2="313" stroke="#6a6a6a" stroke-width="1"/><line x1="649.3" y1="308.5" x2="649.3" y2="313" stroke="#6a6a6a" stroke-width="1"/></svg><div class="t" style="right:689.7px;top:74.53px;font-size:10px;color:#666666;text-align:right;">100M</div><div class="t" style="right:689.7px;top:106.98px;font-size:10px;color:#666666;text-align:right;">10M</div><div class="t" style="right:689.7px;top:139.44px;font-size:10px;color:#666666;text-align:right;">1M</div><div class="t" style="right:689.7px;top:171.89px;font-size:10px;color:#666666;text-align:right;">100K</div><div class="t" style="right:689.7px;top:204.34px;font-size:10px;color:#666666;text-align:right;">10K</div><div class="t" style="right:689.7px;top:236.78px;font-size:10px;color:#666666;text-align:right;">100</div><div class="t" style="right:689.7px;top:269.24px;font-size:10px;color:#666666;text-align:right;">10</div><div class="t" style="right:689.7px;top:301.69px;font-size:10px;color:#666666;text-align:right;">1</div><div class="t" style="left:68.9px;width:60px;text-align:center;top:320.34px;font-size:10px;font-weight:bold;color:#555;">18:00</div><div class="t" style="left:178.7px;width:60px;text-align:center;top:320.34px;font-size:10px;font-weight:bold;color:#555;">Jun 19</div><div class="t" style="left:290.5px;width:60px;text-align:center;top:320.34px;font-size:10px;font-weight:bold;color:#555;">06:00</div><div class="t" style="left:400px;width:60px;text-align:center;top:320.34px;font-size:10px;font-weight:bold;color:#555;">12:00</div><div class="t" style="left:507.9px;width:60px;text-align:center;top:320.34px;font-size:10px;font-weight:bold;color:#555;">18:00</div><div class="t" style="left:619.3px;width:60px;text-align:center;top:320.34px;font-size:10px;font-weight:bold;color:#555;">Jun 20</div><svg class="abs" style="left:0;top:0" width="736" height="386"><polyline points="51,289.53 86.31,305.22 134.17,299.33 202.82,265.59 265.2,300.12 313.06,292.27 355.43,265.59 418.99,299.33 564.93,299.33 621.81,265.59 672.42,299.33 705.37,273.05 712.04,279.33" fill="none" stroke="#2f8ef2" stroke-width="1.1" stroke-linejoin="round" /><polyline points="51,266.77 69.44,228.72 102,285.21 152.22,211.85 207.92,285.21 243.23,284.82 313.85,285.6 353.08,285.21 358.96,284.43 364.85,282.46 370.73,278.54 376.62,272.26 382.5,264.03 388.39,254.22 394.27,243.23 417.03,211.85 458.22,270.69 506.87,286.39 568.46,211.85 636.33,277.76 690.47,222.05 712.04,242.06" fill="none" stroke="#2a9b62" stroke-width="1.1" stroke-linejoin="round" /><polyline points="51,274.62 81.21,147.9 112.99,259.71 215.77,259.71 243.23,258.93 274.62,259.71 333.46,260.49 358.96,259.71 419.77,113.77 459.79,230.68 506.87,262.06 566.89,113.77 633.19,259.71 673.21,255.39 712.04,267.56" fill="none" stroke="#d8661b" stroke-width="1.1" stroke-linejoin="round" /></svg><div class="abs" style="left:19.8px;top:352px;width:10px;height:10px;border-radius:5px;background:#d8661b;"></div><div class="t" style="left:34.7px;top:351.04px;font-size:12px;color:#555;">growth</div><div class="abs" style="left:80.6px;top:352px;width:10px;height:10px;border-radius:5px;background:#2a9b62;"></div><div class="t" style="left:95.5px;top:351.04px;font-size:12px;color:#555;">inngestbot</div><div class="abs" style="left:159.6px;top:352px;width:10px;height:10px;border-radius:5px;background:#2f8ef2;"></div><div class="t" style="left:174.5px;top:351.04px;font-size:12px;color:#555;">github-pr-bot</div></div></div><div class="card" style="left:236px;top:991px;width:611px;height:386px;"><div class="abs" style="left:-1px;top:-1px;width:611px;height:386px;"><div class="ttl">SDK request throughput</div><svg class="abs" style="left:219.0px;top:21.0px" width="14" height="14" viewBox="0 0 14 14"><circle cx="7" cy="7" r="6.1" fill="none" stroke="#555" stroke-width="1.3"/><path d="M5.2 5.6a1.85 1.85 0 1 1 2.6 1.7c-.5.25-.8.55-.8 1.05v.35" fill="none" stroke="#555" stroke-width="1.3" stroke-linecap="round"/><circle cx="7" cy="10.3" r=".8" fill="#555"/></svg><svg class="abs" style="left:0;top:0" width="611" height="386"><polygon points="46.99,194.3 58.18,192.21 62.66,193.25 71.61,192.51 76.84,191.46 94.75,192.66 99.22,191.61 104.45,189.82 109.67,190.42 121.61,190.12 127.58,190.57 132.06,191.61 136.54,188.78 140.27,186.84 152.21,186.84 159.67,193.7 164.15,195.19 168.63,194.15 173.85,195.64 191.01,195.19 197.73,198.18 202.21,199.67 218.63,202.96 223.85,203.1 232.81,205.64 238.03,204.75 252.21,184.75 255.94,182.51 260.42,181.91 270.12,182.81 276.09,167.58 287.28,181.46 292.51,182.06 297.73,179.97 302.66,155.64 315.64,144.45 320.12,154.9 325.27,154.9 330.64,147.13 334.22,156.69 345.87,144.45 352.58,157.88 357.81,152.21 362.28,152.66 380.19,150.12 384.67,148.63 389.9,148.93 398.85,145.94 412.28,144.45 417.51,145.49 421.99,145.49 430.94,148.48 447.36,144.75 450.34,144.75 454.07,142.51 458.55,142.66 463.78,141.16 476.46,139.97 481.69,141.76 495.12,141.76 508.55,141.16 517.51,143.4 522.73,142.21 527.96,143.4 544.37,143.4 549.6,141.01 557.81,140.27 572.73,142.51 577.96,145.64 586.91,143.4 590.94,145.19 590.94,308 46.99,308" fill="#fdf5e2"/><polygon points="46.99,196.39 58.18,194.3 62.66,195.19 71.61,194.45 76.84,193.7 94.75,194.6 99.97,193.25 104.45,191.91 109.67,192.36 124.6,192.21 130.57,193.4 136.54,195.49 141.01,194.6 158.93,195.64 164.15,196.99 168.63,196.09 173.1,197.73 191.76,197.13 197.73,199.67 202.21,201.16 218.63,204.75 223.85,204.9 232.81,207.13 238.03,206.39 251.46,195.19 257.43,189.22 262.66,185.64 270.87,188.03 282.81,185.64 288.03,184 293.25,187.13 299.97,183.55 308.93,160.87 315.64,158.18 320.12,157.58 329.45,157.13 334.22,158.93 348.1,158.63 353.03,160.57 357.81,154.9 362.28,155.19 380.19,152.96 385.42,151.46 389.9,151.61 399.6,148.93 412.28,147.13 417.51,148.33 421.99,148.33 430.94,151.16 445.12,147.43 450.34,141.16 454.07,139.52 458.55,139.67 463.78,138.48 476.46,136.99 481.69,138.78 490.64,138.48 508.55,138.48 513.03,141.76 519,141.16 522.73,141.16 527.21,142.21 545.87,142.21 551.09,139.52 556.31,140.27 573.48,137.28 577.96,140.27 582.43,147.73 586.91,146.39 590.94,147.88 590.94,308 46.99,308" fill="#f2f6e7"/></svg><svg class="abs" style="left:0;top:0" width="611" height="386"><line x1="47.3" y1="77.49" x2="590.5" y2="77.49" stroke="#e4e4e4" stroke-width="1"/><line x1="47.3" y1="110.42" x2="590.5" y2="110.42" stroke="#e4e4e4" stroke-width="1"/><line x1="47.3" y1="143.35" x2="590.5" y2="143.35" stroke="#e4e4e4" stroke-width="1"/><line x1="47.3" y1="176.28" x2="590.5" y2="176.28" stroke="#e4e4e4" stroke-width="1"/><line x1="47.3" y1="209.21" x2="590.5" y2="209.21" stroke="#e4e4e4" stroke-width="1"/><line x1="47.3" y1="242.14" x2="590.5" y2="242.14" stroke="#e4e4e4" stroke-width="1"/><line x1="47.3" y1="275.07" x2="590.5" y2="275.07" stroke="#e4e4e4" stroke-width="1"/><line x1="47.3" y1="308.5" x2="590.5" y2="308.5" stroke="#6a6a6a" stroke-width="1"/><line x1="98.9" y1="308.5" x2="98.9" y2="313" stroke="#6a6a6a" stroke-width="1"/><line x1="185" y1="308.5" x2="185" y2="313" stroke="#6a6a6a" stroke-width="1"/><line x1="272.4" y1="308.5" x2="272.4" y2="313" stroke="#6a6a6a" stroke-width="1"/><line x1="357.9" y1="308.5" x2="357.9" y2="313" stroke="#6a6a6a" stroke-width="1"/><line x1="441.8" y1="308.5" x2="441.8" y2="313" stroke="#6a6a6a" stroke-width="1"/><line x1="529.2" y1="308.5" x2="529.2" y2="313" stroke="#6a6a6a" stroke-width="1"/></svg><div class="t" style="right:568.6px;top:74.53px;font-size:10px;color:#666666;text-align:right;">35 K</div><div class="t" style="right:568.6px;top:107.16px;font-size:10px;color:#666666;text-align:right;">30 K</div><div class="t" style="right:568.6px;top:139.79px;font-size:10px;color:#666666;text-align:right;">25 K</div><div class="t" style="right:568.6px;top:172.43px;font-size:10px;color:#666666;text-align:right;">20 K</div><div class="t" style="right:568.6px;top:205.06px;font-size:10px;color:#666666;text-align:right;">15 K</div><div class="t" style="right:568.6px;top:237.69px;font-size:10px;color:#666666;text-align:right;">10 K</div><div class="t" style="right:568.6px;top:270.32px;font-size:10px;color:#666666;text-align:right;">5 K</div><div class="t" style="right:568.6px;top:302.95px;font-size:10px;color:#666666;text-align:right;">0 K</div><div class="t" style="left:68.9px;width:60px;text-align:center;top:320.34px;font-size:10px;font-weight:bold;color:#555;">18:00</div><div class="t" style="left:155px;width:60px;text-align:center;top:320.34px;font-size:10px;font-weight:bold;color:#555;">Jun 19</div><div class="t" style="left:242.4px;width:60px;text-align:center;top:320.34px;font-size:10px;font-weight:bold;color:#555;">06:00</div><div class="t" style="left:327.9px;width:60px;text-align:center;top:320.34px;font-size:10px;font-weight:bold;color:#555;">12:00</div><div class="t" style="left:411.8px;width:60px;text-align:center;top:320.34px;font-size:10px;font-weight:bold;color:#555;">18:00</div><div class="t" style="left:499.2px;width:60px;text-align:center;top:320.34px;font-size:10px;font-weight:bold;color:#555;">Jun 20</div><svg class="abs" style="left:0;top:0" width="611" height="386"><polyline points="46.99,194.3 58.18,192.21 62.66,193.25 71.61,192.51 76.84,191.46 94.75,192.66 99.22,191.61 104.45,189.82 109.67,190.42 121.61,190.12 127.58,190.57 132.06,191.61 136.54,188.78 140.27,186.84 152.21,186.84 159.67,193.7 164.15,195.19 168.63,194.15 173.85,195.64 191.01,195.19 197.73,198.18 202.21,199.67 218.63,202.96 223.85,203.1 232.81,205.64 238.03,204.75 252.21,184.75 255.94,182.51 260.42,181.91 270.12,182.81 276.09,167.58 287.28,181.46 292.51,182.06 297.73,179.97 302.66,155.64 315.64,144.45 320.12,154.9 325.27,154.9 330.64,147.13 334.22,156.69 345.87,144.45 352.58,157.88 357.81,152.21 362.28,152.66 380.19,150.12 384.67,148.63 389.9,148.93 398.85,145.94 412.28,144.45 417.51,145.49 421.99,145.49 430.94,148.48 447.36,144.75 450.34,144.75 454.07,142.51 458.55,142.66 463.78,141.16 476.46,139.97 481.69,141.76 495.12,141.76 508.55,141.16 517.51,143.4 522.73,142.21 527.96,143.4 544.37,143.4 549.6,141.01 557.81,140.27 572.73,142.51 577.96,145.64 586.91,143.4 590.94,145.19" fill="none" stroke="#d8661b" stroke-width="1.1" stroke-linejoin="round" /><polyline points="46.99,196.39 58.18,194.3 62.66,195.19 71.61,194.45 76.84,193.7 94.75,194.6 99.97,193.25 104.45,191.91 109.67,192.36 124.6,192.21 130.57,193.4 136.54,195.49 141.01,194.6 158.93,195.64 164.15,196.99 168.63,196.09 173.1,197.73 191.76,197.13 197.73,199.67 202.21,201.16 218.63,204.75 223.85,204.9 232.81,207.13 238.03,206.39 251.46,195.19 257.43,189.22 262.66,185.64 270.87,188.03 282.81,185.64 288.03,184 293.25,187.13 299.97,183.55 308.93,160.87 315.64,158.18 320.12,157.58 329.45,157.13 334.22,158.93 348.1,158.63 353.03,160.57 357.81,154.9 362.28,155.19 380.19,152.96 385.42,151.46 389.9,151.61 399.6,148.93 412.28,147.13 417.51,148.33 421.99,148.33 430.94,151.16 445.12,147.43 450.34,141.16 454.07,139.52 458.55,139.67 463.78,138.48 476.46,136.99 481.69,138.78 490.64,138.48 508.55,138.48 513.03,141.76 519,141.16 522.73,141.16 527.21,142.21 545.87,142.21 551.09,139.52 556.31,140.27 573.48,137.28 577.96,140.27 582.43,147.73 586.91,146.39 590.94,147.88" fill="none" stroke="#2a9b62" stroke-width="1.1" stroke-linejoin="round" /></svg><div class="abs" style="left:19.8px;top:352px;width:10px;height:10px;border-radius:5px;background:#8b74f8;"></div><div class="t" style="left:34.7px;top:351.04px;font-size:12px;color:#555;">Started</div><div class="abs" style="left:80.8px;top:352px;width:10px;height:10px;border-radius:5px;background:#d8661b;"></div><div class="t" style="left:95.7px;top:351.04px;font-size:12px;color:#555;">Queued</div><div class="abs" style="left:146.1px;top:352px;width:10px;height:10px;border-radius:5px;background:#2a9b62;"></div><div class="t" style="left:161px;top:351.04px;font-size:12px;color:#555;">Ended</div></div></div><div class="card" style="left:855px;top:991px;width:861px;height:386px;"><div class="abs" style="left:-1px;top:-1px;width:861px;height:386px;"><div class="ttl">Backlog</div><svg class="abs" style="left:92.0px;top:21.0px" width="14" height="14" viewBox="0 0 14 14"><circle cx="7" cy="7" r="6.1" fill="none" stroke="#555" stroke-width="1.3"/><path d="M5.2 5.6a1.85 1.85 0 1 1 2.6 1.7c-.5.25-.8.55-.8 1.05v.35" fill="none" stroke="#555" stroke-width="1.3" stroke-linecap="round"/><circle cx="7" cy="10.3" r=".8" fill="#555"/></svg><svg class="abs" style="left:0;top:0" width="861" height="386"><line x1="47.3" y1="77.49" x2="833" y2="77.49" stroke="#e4e4e4" stroke-width="1"/><line x1="47.3" y1="110.42" x2="833" y2="110.42" stroke="#e4e4e4" stroke-width="1"/><line x1="47.3" y1="143.35" x2="833" y2="143.35" stroke="#e4e4e4" stroke-width="1"/><line x1="47.3" y1="176.28" x2="833" y2="176.28" stroke="#e4e4e4" stroke-width="1"/><line x1="47.3" y1="209.21" x2="833" y2="209.21" stroke="#e4e4e4" stroke-width="1"/><line x1="47.3" y1="242.14" x2="833" y2="242.14" stroke="#e4e4e4" stroke-width="1"/><line x1="47.3" y1="275.07" x2="833" y2="275.07" stroke="#e4e4e4" stroke-width="1"/><line x1="47.3" y1="308.5" x2="833" y2="308.5" stroke="#6a6a6a" stroke-width="1"/><line x1="98.7" y1="308.5" x2="98.7" y2="313" stroke="#6a6a6a" stroke-width="1"/><line x1="208.8" y1="308.5" x2="208.8" y2="313" stroke="#6a6a6a" stroke-width="1"/><line x1="320.3" y1="308.5" x2="320.3" y2="313" stroke="#6a6a6a" stroke-width="1"/><line x1="429.6" y1="308.5" x2="429.6" y2="313" stroke="#6a6a6a" stroke-width="1"/><line x1="537.9" y1="308.5" x2="537.9" y2="313" stroke="#6a6a6a" stroke-width="1"/><line x1="649.4" y1="308.5" x2="649.4" y2="313" stroke="#6a6a6a" stroke-width="1"/></svg><div class="t" style="right:818.3px;top:74.53px;font-size:10px;color:#666666;text-align:right;">35 K</div><div class="t" style="right:818.3px;top:107.16px;font-size:10px;color:#666666;text-align:right;">30 K</div><div class="t" style="right:818.3px;top:139.79px;font-size:10px;color:#666666;text-align:right;">25 K</div><div class="t" style="right:818.3px;top:172.43px;font-size:10px;color:#666666;text-align:right;">20 K</div><div class="t" style="right:818.3px;top:205.06px;font-size:10px;color:#666666;text-align:right;">15 K</div><div class="t" style="right:818.3px;top:237.69px;font-size:10px;color:#666666;text-align:right;">10 K</div><div class="t" style="right:818.3px;top:270.32px;font-size:10px;color:#666666;text-align:right;">5 K</div><div class="t" style="right:818.3px;top:302.95px;font-size:10px;color:#666666;text-align:right;">0 K</div><div class="t" style="left:68.7px;width:60px;text-align:center;top:320.34px;font-size:10px;font-weight:bold;color:#555;">18:00</div><div class="t" style="left:178.8px;width:60px;text-align:center;top:320.34px;font-size:10px;font-weight:bold;color:#555;">Jun 19</div><div class="t" style="left:290.3px;width:60px;text-align:center;top:320.34px;font-size:10px;font-weight:bold;color:#555;">06:00</div><div class="t" style="left:399.6px;width:60px;text-align:center;top:320.34px;font-size:10px;font-weight:bold;color:#555;">12:00</div><div class="t" style="left:507.9px;width:60px;text-align:center;top:320.34px;font-size:10px;font-weight:bold;color:#555;">18:00</div><div class="t" style="left:619.4px;width:60px;text-align:center;top:320.34px;font-size:10px;font-weight:bold;color:#555;">Jun 20</div><svg class="abs" style="left:0;top:0" width="861" height="386"><polyline points="47.27,272.6 93.16,301.51 148.69,291.42 230.38,236.81 303.81,292.34 360.26,280.4 409.82,236.81 483.71,291.42 658.56,291.42 724.19,236.81 783.85,291.42 822.85,249.2 832.95,261.59" fill="none" stroke="#2f8ef2" stroke-width="1.1" stroke-linejoin="round" /><polyline points="47.27,266.18 72.51,216.15 111.52,278.11 170.72,197.8 236.35,278.11 298.3,277.65 367.14,278.57 413.03,278.11 419.92,277.19 426.8,274.44 433.69,269.85 440.57,263.42 447.45,255.16 454.34,244.61 461.22,232.68 482.79,197.8 531.44,262.51 588.34,279.49 661.31,197.8 742.54,269.39 805.87,208.81 832.95,231.76" fill="none" stroke="#2a9b62" stroke-width="1.1" stroke-linejoin="round" /><polyline points="47.27,249.2 74.8,146.86 112.44,259.75 234.05,259.75 266.18,258.38 321.25,259.75 408.44,259.75 480.5,112.9 529.14,230.84 585.13,261.59 657.18,113.35 736.58,259.75 784.76,254.7 832.95,267.55" fill="none" stroke="#d8661b" stroke-width="1.1" stroke-linejoin="round" /></svg><div class="abs" style="left:19.8px;top:352px;width:10px;height:10px;border-radius:5px;background:#d8661b;"></div><div class="t" style="left:34.7px;top:351.04px;font-size:12px;color:#555;">growth</div><div class="abs" style="left:80.6px;top:352px;width:10px;height:10px;border-radius:5px;background:#2a9b62;"></div><div class="t" style="left:95.5px;top:351.04px;font-size:12px;color:#555;">inngestbot</div><div class="abs" style="left:159.6px;top:352px;width:10px;height:10px;border-radius:5px;background:#2f8ef2;"></div><div class="t" style="left:174.5px;top:351.04px;font-size:12px;color:#555;">github-pr-bot</div></div></div><div class="card" style="left:236px;top:1385px;width:860px;height:386px;"><div class="abs" style="left:-1px;top:-1px;width:860px;height:386px;"><div class="ttl">Account concurrency</div><svg class="abs" style="left:199.0px;top:21.0px" width="14" height="14" viewBox="0 0 14 14"><circle cx="7" cy="7" r="6.1" fill="none" stroke="#555" stroke-width="1.3"/><path d="M5.2 5.6a1.85 1.85 0 1 1 2.6 1.7c-.5.25-.8.55-.8 1.05v.35" fill="none" stroke="#555" stroke-width="1.3" stroke-linecap="round"/><circle cx="7" cy="10.3" r=".8" fill="#555"/></svg><svg class="abs" style="left:0;top:0" width="860" height="386"><line x1="47.3" y1="77.49" x2="839.8" y2="77.49" stroke="#e4e4e4" stroke-width="1"/><line x1="47.3" y1="110.42" x2="839.8" y2="110.42" stroke="#e4e4e4" stroke-width="1"/><line x1="47.3" y1="143.35" x2="839.8" y2="143.35" stroke="#e4e4e4" stroke-width="1"/><line x1="47.3" y1="176.28" x2="839.8" y2="176.28" stroke="#e4e4e4" stroke-width="1"/><line x1="47.3" y1="209.21" x2="839.8" y2="209.21" stroke="#e4e4e4" stroke-width="1"/><line x1="47.3" y1="242.14" x2="839.8" y2="242.14" stroke="#e4e4e4" stroke-width="1"/><line x1="47.3" y1="275.07" x2="839.8" y2="275.07" stroke="#e4e4e4" stroke-width="1"/><line x1="47.3" y1="308.5" x2="839.8" y2="308.5" stroke="#6a6a6a" stroke-width="1"/><line x1="98.7" y1="308.5" x2="98.7" y2="313" stroke="#6a6a6a" stroke-width="1"/><line x1="230.4" y1="308.5" x2="230.4" y2="313" stroke="#6a6a6a" stroke-width="1"/><line x1="363.9" y1="308.5" x2="363.9" y2="313" stroke="#6a6a6a" stroke-width="1"/><line x1="495.6" y1="308.5" x2="495.6" y2="313" stroke="#6a6a6a" stroke-width="1"/><line x1="625.5" y1="308.5" x2="625.5" y2="313" stroke="#6a6a6a" stroke-width="1"/><line x1="759.5" y1="308.5" x2="759.5" y2="313" stroke="#6a6a6a" stroke-width="1"/></svg><div class="t" style="right:817.3px;top:74.53px;font-size:10px;color:#666666;text-align:right;">35 K</div><div class="t" style="right:817.3px;top:107.16px;font-size:10px;color:#666666;text-align:right;">30 K</div><div class="t" style="right:817.3px;top:139.79px;font-size:10px;color:#666666;text-align:right;">25 K</div><div class="t" style="right:817.3px;top:172.43px;font-size:10px;color:#666666;text-align:right;">20 K</div><div class="t" style="right:817.3px;top:205.06px;font-size:10px;color:#666666;text-align:right;">15 K</div><div class="t" style="right:817.3px;top:237.69px;font-size:10px;color:#666666;text-align:right;">10 K</div><div class="t" style="right:817.3px;top:270.32px;font-size:10px;color:#666666;text-align:right;">5 K</div><div class="t" style="right:817.3px;top:302.95px;font-size:10px;color:#666666;text-align:right;">0 K</div><div class="t" style="left:68.7px;width:60px;text-align:center;top:320.34px;font-size:10px;font-weight:bold;color:#555;">18:00</div><div class="t" style="left:200.4px;width:60px;text-align:center;top:320.34px;font-size:10px;font-weight:bold;color:#555;">Jun 19</div><div class="t" style="left:333.9px;width:60px;text-align:center;top:320.34px;font-size:10px;font-weight:bold;color:#555;">06:00</div><div class="t" style="left:465.6px;width:60px;text-align:center;top:320.34px;font-size:10px;font-weight:bold;color:#555;">12:00</div><div class="t" style="left:595.5px;width:60px;text-align:center;top:320.34px;font-size:10px;font-weight:bold;color:#555;">18:00</div><div class="t" style="left:729.5px;width:60px;text-align:center;top:320.34px;font-size:10px;font-weight:bold;color:#555;">Jun 20</div><svg class="abs" style="left:0;top:0" width="860" height="386"><polygon points="47.27,185.87 64.25,185.41 91.79,183.11 105.55,184.03 128.5,182.65 169.8,183.57 188.16,180.36 234.05,181.28 243.23,182.65 261.59,177.15 286.83,177.15 302.89,184.95 321.25,185.41 330.43,186.32 367.14,186.32 385.5,190 422.21,194.58 454.34,196.88 463.52,196.42 491.05,174.85 500.23,172.56 527.77,173.02 542.91,156.03 567.23,171.64 585.13,169.8 594.31,143.64 624.14,132.17 635.61,143.64 644.79,143.64 653.97,134.47 663.15,144.56 686.09,132.17 700.78,146.4 709.96,140.43 734.28,139.51 764.11,136.76 780.17,136.3 803.12,134.01 826.07,132.63 839.83,133.09 839.83,309.2 47.27,309.2" fill="#fcc23e"/><polygon points="47.27,223.5 64.25,223.96 91.79,221.66 114.73,222.12 137.68,221.2 169.8,222.12 188.16,219.83 243.23,221.2 261.59,217.53 286.83,217.53 302.89,223.04 330.43,223.96 367.14,223.96 385.5,226.71 422.21,229.46 454.34,231.3 463.52,230.84 491.05,215.24 500.23,213.4 527.77,213.86 542.91,202.39 567.23,213.4 585.13,212.48 594.31,194.58 624.14,185.87 635.61,194.58 653.97,187.7 663.15,194.58 686.09,185.87 700.78,195.96 709.96,191.83 734.28,191.83 780.17,188.62 794.86,187.24 823.77,213.4 839.83,214.32 839.83,309.2 47.27,309.2" fill="#66bc8a"/><polygon points="47.27,263.42 64.25,262.96 91.79,261.59 137.68,261.59 169.8,262.05 188.16,260.21 234.05,260.67 261.59,262.51 286.83,262.51 312.07,263.42 367.14,263.42 385.5,265.26 422.21,267.55 454.34,268.93 463.52,268.93 491.05,261.59 500.23,258.83 516.29,256.08 532.35,257.92 567.23,256.08 578.25,257 594.31,252.87 610.37,241.85 633.32,239.56 660.85,240.48 688.39,240.48 700.78,241.85 709.96,238.64 734.28,238.18 780.17,236.35 794.86,234.97 823.77,284.08 839.83,284.99 839.83,309.2 47.27,309.2" fill="#9dd2fc"/><line x1="47.3" y1="143.6" x2="839.8" y2="143.6" stroke="#e8523f" stroke-width="1"/><rect x="594.3" y="78" width="106.5" height="230" fill="rgba(222,60,70,0.17)"/><polygon points="632.3,193.6 643,193.6 658.6,240 613.7,240" fill="#6f9f81"/></svg><div class="abs" style="left:19.8px;top:352px;width:10px;height:10px;border-radius:5px;background:#eda23b;"></div><div class="t" style="left:34.7px;top:351.04px;font-size:12px;color:#555;">growth</div><div class="abs" style="left:80.8px;top:352px;width:10px;height:10px;border-radius:5px;background:#66bc8a;"></div><div class="t" style="left:95.7px;top:351.04px;font-size:12px;color:#555;">inngestbot</div><div class="abs" style="left:159.3px;top:352px;width:10px;height:10px;border-radius:5px;background:#5ab0f7;"></div><div class="t" style="left:174.2px;top:351.04px;font-size:12px;color:#555;">github-pr-bot</div></div></div><div class="card" style="left:1104px;top:1385px;width:612px;height:386px;"><div class="abs" style="left:-1px;top:-1px;width:612px;height:386px;"><svg class="abs" style="left:262px;top:75.3px" width="88" height="88" viewBox="0 0 88 88">
<rect x="8" y="8" width="72" height="72" rx="6" fill="#e0f2e5"/>
<path d="M2 8.5h84M2 79.5h84M8.5 2v84M79.5 2v84" stroke="#bfe0c9" stroke-width="0.8" fill="none"/>
<path d="M32.6 32.4V55.2H56.1" fill="none" stroke="#2c9c63" stroke-width="3"/>
<path d="M38 46.9L44.7 40.4L49.6 43.6L56.4 37.2" fill="none" stroke="#2c9c63" stroke-width="3"/>
</svg><div class="t" style="left:0;width:612px;text-align:center;top:189.4px;font-size:17.5px;letter-spacing:-0.25px;font-weight:bold;color:#2c2c2c;">Can’t find the data you need?</div><div class="t" style="left:0;width:612px;text-align:center;top:221.4px;font-size:14px;color:#6b6b6b;">Let our team know which charts are most useful to you and request any additional</div><div class="t" style="left:0;width:612px;text-align:center;top:241.6px;font-size:14px;color:#6b6b6b;">charts that you might need but are currently missing.</div><div class="btn" style="left:191px;top:276px;width:104px;height:32px;"><div class="t" style="left:0;width:102px;text-align:center;top:10px;font-size:12px;color:#2c2c2c;">Request charts</div></div><div class="btn" style="left:304px;top:276px;width:117px;height:32px;"><div class="t" style="left:0;width:115px;text-align:center;top:10px;font-size:12px;color:#2c2c2c;">Give us feedback</div></div></div></div></div></body></html>
